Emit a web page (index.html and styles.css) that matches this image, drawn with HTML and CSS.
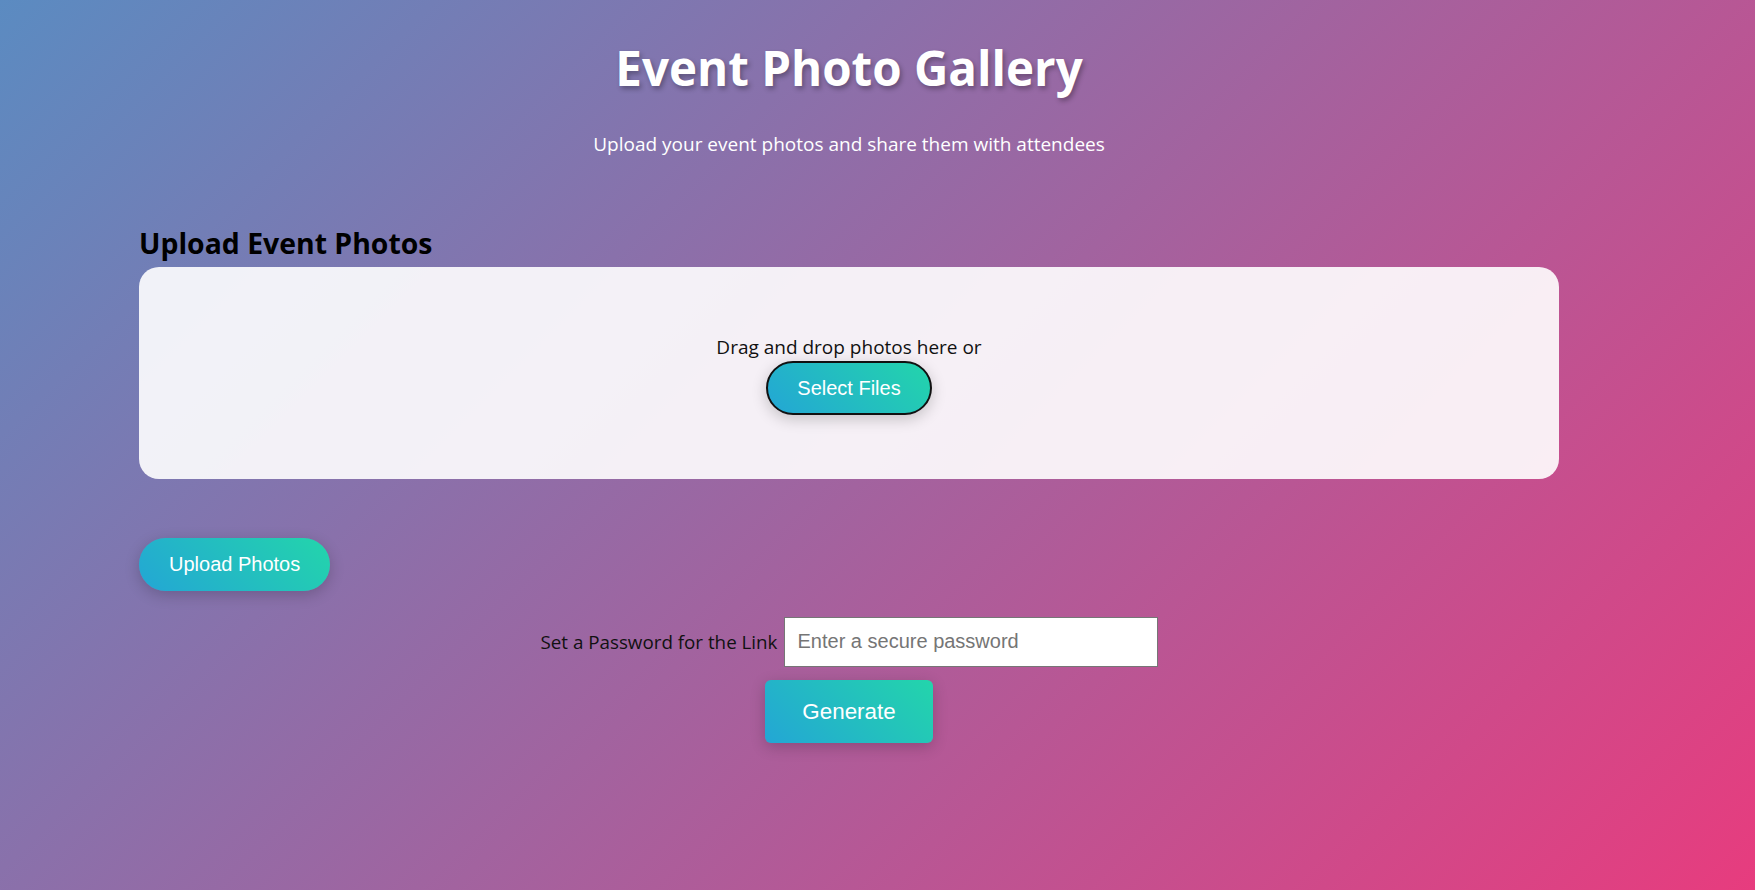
FILE: index.html
```
<!DOCTYPE html>
<html lang="en">
<head>
<meta charset="utf-8">
<title>Event Photo Gallery</title>
<link rel="stylesheet" href="styles.css">
</head>
<body>
<main class="page">
  <header class="hero">
    <h1 class="title">Event Photo Gallery</h1>
    <p class="subtitle">Upload your event photos and share them with attendees</p>
  </header>
  <section class="upload">
    <h2 class="section-title">Upload Event Photos</h2>
    <div class="dropzone">
      <p class="drop-text">Drag and drop photos here or</p>
      <button class="btn btn-pill btn-select" type="button">Select Files</button>
    </div>
    <button class="btn btn-pill btn-upload" type="button">Upload Photos</button>
  </section>
  <section class="share">
    <div class="password-row">
      <label class="password-label" for="pw">Set a Password for the Link</label>
      <input class="password-input" id="pw" type="password" placeholder="Enter a secure password">
    </div>
    <button class="btn btn-generate" type="button">Generate</button>
  </section>
</main>
</body>
</html>
```
FILE: styles.css
```
* { box-sizing: border-box; }

html, body {
  margin: 0;
  min-height: 100%;
}

body {
  min-height: 100vh;
  font-family: "Open Sans", "Noto Sans", sans-serif;
  color: #111;
  background: linear-gradient(135deg, #5b8bc1 0%, #e73c7e 100%);
  background-attachment: fixed;
}

.page {
  width: 1420px;
  margin-left: 139px;
  padding-top: 38.5px;
  padding-bottom: 40px;
}

.hero {
  text-align: center;
  color: #fff;
}

.title {
  margin: 0;
  font-size: 47.5px;
  line-height: 58px;
  font-weight: 700;
  text-shadow: 2px 3px 5px rgba(0, 0, 0, 0.3);
}

.subtitle {
  margin: 34px 0 0;
  font-size: 19px;
  line-height: 26px;
  color: #fff;
}

.section-title {
  margin: 68px 0 0;
  font-size: 28.4px;
  line-height: 36px;
  font-weight: 700;
  color: #000;
}

.dropzone {
  margin-top: 6.5px;
  padding: 67px 20px 64px;
  background: rgba(255, 255, 255, 0.9);
  border-radius: 20px;
  display: flex;
  flex-direction: column;
  align-items: center;
}

.drop-text {
  margin: 0 0 1px;
  font-size: 19px;
  line-height: 26px;
  color: #111;
}

.btn {
  font-family: "Liberation Sans", Arial, sans-serif;
  color: #fff;
  border: 0;
  background: linear-gradient(45deg, #23a6d5, #23d5ab);
  cursor: pointer;
  box-shadow: 0 4px 15px rgba(0, 0, 0, 0.2);
}

.btn-pill {
  font-size: 20px;
  line-height: 23px;
  border-radius: 30px;
}

.btn-select {
  padding: 13.5px 29px;
  border: 2px solid #111;
}

.btn-upload {
  display: block;
  margin-top: 59px;
  padding: 15px 30px;
}

.share {
  display: flex;
  flex-direction: column;
  align-items: center;
}

.password-row {
  margin-top: 25.5px;
  display: flex;
  align-items: center;
  gap: 6px;
}

.password-label {
  font-size: 18.8px;
  line-height: 26px;
  color: #111;
}

.password-input {
  width: 374px;
  height: 50px;
  padding: 0 13px;
  font-family: "Liberation Sans", Arial, sans-serif;
  font-size: 20px;
  border: 1px solid #767676;
  background: #fff;
  color: #222;
}

.password-input::placeholder {
  color: #757575;
}

.btn-generate {
  margin-top: 13.5px;
  padding: 18.5px 37px;
  font-size: 22.4px;
  line-height: 26px;
  border-radius: 6px;
}
```
